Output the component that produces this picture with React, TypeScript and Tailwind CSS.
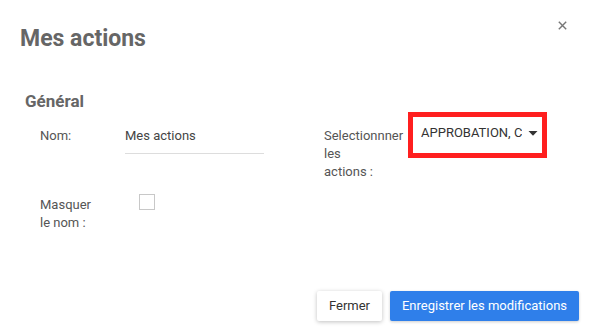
import React from "react";

export default function App() {
  return (
    <div
      className="w-[589px] h-[332px] bg-white flex flex-col text-[#555]"
      style={{ fontFamily: "Roboto, 'Liberation Sans', sans-serif" }}
    >
      <div className="flex justify-between items-start pt-[25px] pl-[20px] pr-[22px]">
        <h1 className="text-[23px] leading-[28px] font-bold text-[#666]">Mes actions</h1>
        <button className="mt-[-4px] w-[9px] h-[9px] flex items-center justify-center">
          <svg width="9" height="9" viewBox="0 0 9 9">
            <path d="M0.8 0.8 L8.2 8.2 M8.2 0.8 L0.8 8.2" stroke="#777" strokeWidth="1.4" />
          </svg>
        </button>
      </div>

      <div className="mt-[38px] pl-[25px] text-[17px] leading-[20px] font-bold text-[#666]">Général</div>

      <div className="mt-[1px] flex items-start pl-[40px]">
        <div className="w-[85px] mt-[15px] text-[13px] leading-[18px] text-[#555]">Nom:</div>
        <div className="w-[139px] mt-[15px] h-[27px] border-b border-[#ddd] text-[13px] leading-[18px] text-[#444]">
          Mes actions
        </div>
        <div className="ml-[60px] w-[84px] mt-[15px] text-[13px] leading-[18px] text-[#555]">
          Selectionnner
          <br />
          les
          <br />
          actions :
        </div>
        <div className="w-[139px] h-[46px] border-[5px] border-[#ff1f1f] pl-[8px] pt-[7px] flex items-start">
          <span className="w-[101px] text-[13px] leading-[18px] text-[#333] whitespace-nowrap overflow-hidden">
            APPROBATION, C
          </span>
          <svg className="ml-[6px] mt-[7px] shrink-0" width="10" height="5" viewBox="0 0 10 5">
            <path d="M0.5 0 L9.5 0 L5 4.8 Z" fill="#333" />
          </svg>
        </div>
      </div>

      <div className="mt-[13px] flex items-start pl-[40px]">
        <div className="w-[85px] mt-[2px] text-[13px] leading-[18px] text-[#555]">
          Masquer
          <br />
          le nom :
        </div>
        <div className="ml-[14px] w-[16px] h-[16px] border border-[#c8c8c8] bg-white" />
      </div>

      <div className="mt-auto pb-[11px] pr-[10px] flex justify-end gap-[8px]">
        <button className="w-[65px] h-[30px] bg-white rounded-[2px] text-[13px] text-[#333] shadow-[0_1px_4px_rgba(0,0,0,0.25)]">
          Fermer
        </button>
        <button className="w-[189px] h-[30px] bg-[#2f7fea] rounded-[2px] text-[13px] text-white shadow-[0_1px_3px_rgba(0,0,0,0.2)]">
          Enregistrer les modifications
        </button>
      </div>
    </div>
  );
}
